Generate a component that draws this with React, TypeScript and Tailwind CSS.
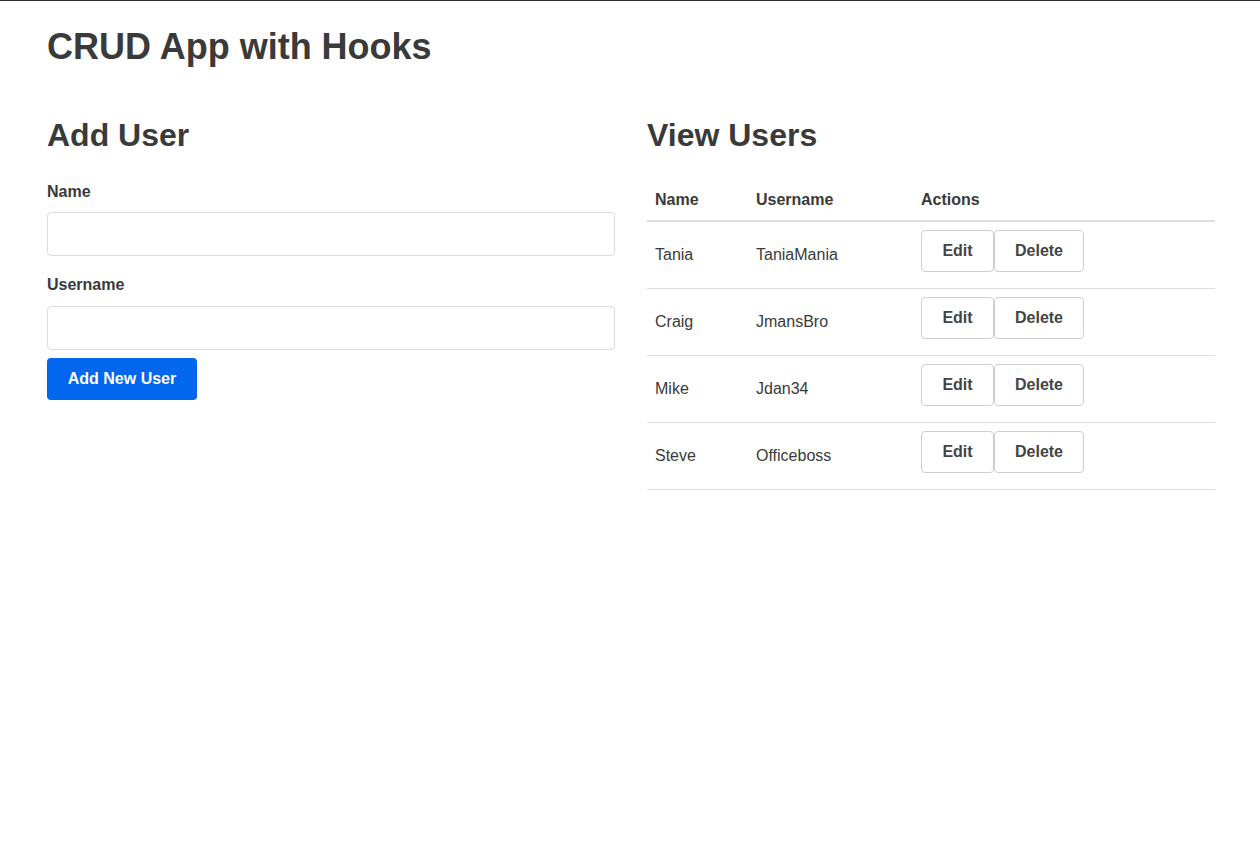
const users = [
  { id: 1, name: 'Tania', username: 'TaniaMania' },
  { id: 2, name: 'Craig', username: 'JmansBro' },
  { id: 3, name: 'Mike', username: 'Jdan34' },
  { id: 4, name: 'Steve', username: 'Officeboss' },
]

// CRUD 예제 화면: 왼쪽 입력 폼 + 오른쪽 사용자 테이블
export default function App() {
  return (
    <div
      className="min-h-[850px] bg-white border-t border-[#2b2f36] text-[#3a3a3a] text-base"
      style={{ fontFamily: '"Liberation Sans", Arial, sans-serif' }}
    >
      <div className="pl-[47px] pr-[45px]">
        <h1 className="text-[36px] font-bold leading-none pt-[28px]">CRUD App with Hooks</h1>
        <div className="flex gap-8 mt-[54px]">
          <div className="w-[568px]">
            <h2 className="text-[32px] font-bold leading-none">Add User</h2>
            <form className="mt-[31px]" onSubmit={(e) => e.preventDefault()}>
              <label className="block font-bold leading-5">Name</label>
              <input
                type="text"
                className="block w-full h-[44px] mt-[10px] border border-[#dcdcdc] rounded px-3 outline-none"
              />
              <label className="block font-bold leading-5 mt-[19px]">Username</label>
              <input
                type="text"
                className="block w-full h-[44px] mt-[11px] border border-[#dcdcdc] rounded px-3 outline-none"
              />
              <button
                type="submit"
                className="mt-2 w-[150px] h-[42px] bg-[#0366ee] text-white font-bold rounded"
              >
                Add New User
              </button>
            </form>
          </div>
          <div className="w-[568px]">
            <h2 className="text-[32px] font-bold leading-none">View Users</h2>
            <table className="w-full mt-[30px] border-collapse text-left">
              <thead>
                <tr className="border-b-2 border-[#dedede]">
                  <th className="w-[101px] px-2 pt-[7px] pb-[8px] font-bold">Name</th>
                  <th className="w-[165px] px-2 pt-[7px] pb-[8px] font-bold">Username</th>
                  <th className="px-2 pt-[7px] pb-[8px] font-bold">Actions</th>
                </tr>
              </thead>
              <tbody>
                {users.map((u) => (
                  <tr key={u.id} className="border-b border-[#dedede] h-[67px]">
                    <td className="px-2 pt-[1px]">{u.name}</td>
                    <td className="px-2 pt-[1px]">{u.username}</td>
                    <td className="px-2">
                      <div className="flex mb-2">
                        <button className="w-[73px] h-[42px] border border-[#cfcfcf] rounded font-bold text-[#444]">
                          Edit
                        </button>
                        <button className="w-[90px] h-[42px] border border-[#cfcfcf] rounded font-bold text-[#444]">
                          Delete
                        </button>
                      </div>
                    </td>
                  </tr>
                ))}
              </tbody>
            </table>
          </div>
        </div>
      </div>
    </div>
  )
}
